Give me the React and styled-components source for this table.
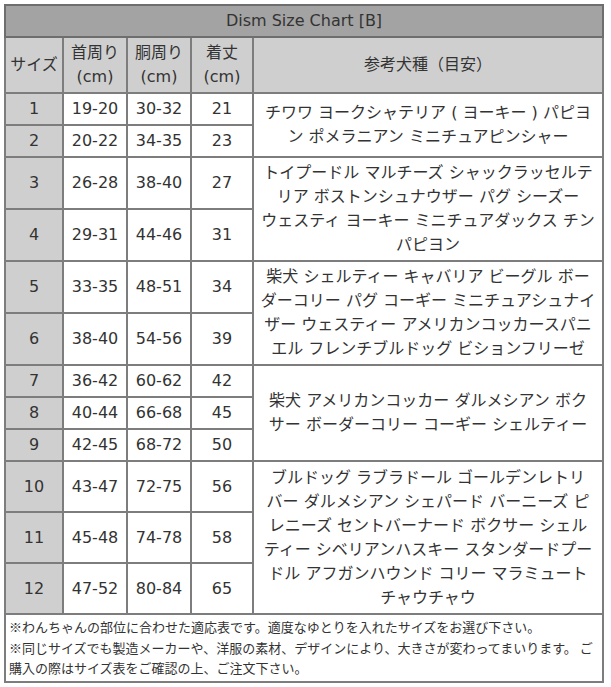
import React from "react";
import styled, { createGlobalStyle } from "styled-components";

const GlobalStyle = createGlobalStyle`
  body {
    margin: 0;
    background: #ffffff;
    font-family: "DejaVu Sans", "Noto Sans CJK JP", sans-serif;
    color: #333333;
  }
`;

const groups = [
  {
    height: 32,
    rows: [
      ["1", "19-20", "30-32", "21"],
      ["2", "20-22", "34-35", "23"],
    ],
    breeds: [
      "チワワ ヨークシャテリア ( ヨーキー ) パピヨ",
      "ン ポメラニアン ミニチュアピンシャー",
    ],
  },
  {
    height: 52,
    rows: [
      ["3", "26-28", "38-40", "27"],
      ["4", "29-31", "44-46", "31"],
    ],
    breeds: [
      "トイプードル マルチーズ シャックラッセルテ",
      "リア ボストンシュナウザー パグ シーズー",
      "ウェスティ ヨーキー ミニチュアダックス チン",
      "パピヨン",
    ],
  },
  {
    height: 52,
    rows: [
      ["5", "33-35", "48-51", "34"],
      ["6", "38-40", "54-56", "39"],
    ],
    breeds: [
      "柴犬 シェルティー キャバリア ビーグル ボー",
      "ダーコリー パグ コーギー ミニチュアシュナイ",
      "ザー ウェスティー アメリカンコッカースパニ",
      "エル フレンチブルドッグ ビションフリーゼ",
    ],
  },
  {
    height: 32,
    rows: [
      ["7", "36-42", "60-62", "42"],
      ["8", "40-44", "66-68", "45"],
      ["9", "42-45", "68-72", "50"],
    ],
    breeds: [
      "柴犬 アメリカンコッカー ダルメシアン ボク",
      "サー ボーダーコリー コーギー シェルティー",
    ],
  },
  {
    height: 51,
    rows: [
      ["10", "43-47", "72-75", "56"],
      ["11", "45-48", "74-78", "58"],
      ["12", "47-52", "80-84", "65"],
    ],
    breeds: [
      "ブルドッグ ラブラドール ゴールデンレトリ",
      "バー ダルメシアン シェパード バーニーズ ピ",
      "レニーズ セントバーナード ボクサー シェル",
      "ティー シベリアンハスキー スタンダードプー",
      "ドル アフガンハウンド コリー マラミュート",
      "チャウチャウ",
    ],
  },
];

const notes = [
  "※わんちゃんの部位に合わせた適応表です。適度なゆとりを入れたサイズをお選び下さい。",
  "※同じサイズでも製造メーカーや、洋服の素材、デザインにより、大きさが変わってまいります。 ご",
  "購入の際はサイズ表をご確認の上、ご注文下さい。",
];

const Lines = ({ lines }) =>
  lines.map((line, i) => (
    <React.Fragment key={i}>
      {line}
      {i < lines.length - 1 && <br />}
    </React.Fragment>
  ));

export default function App() {
  return (
    <Page>
      <GlobalStyle />
      <ChartTable>
        <colgroup>
          <col style={{ width: 58 }} />
          <col style={{ width: 64 }} />
          <col style={{ width: 64 }} />
          <col style={{ width: 62 }} />
          <col />
        </colgroup>
        <thead>
          <Row height={32}>
            <TitleCell colSpan={5}>Dism Size Chart [B]</TitleCell>
          </Row>
          <Row height={56}>
            <HeadCell>サイズ</HeadCell>
            <HeadCell>
              首周り
              <br />
              (cm)
            </HeadCell>
            <HeadCell>
              胴周り
              <br />
              (cm)
            </HeadCell>
            <HeadCell>
              着丈
              <br />
              (cm)
            </HeadCell>
            <HeadCell>参考犬種（目安）</HeadCell>
          </Row>
        </thead>
        <tbody>
          {groups.map((group) =>
            group.rows.map((row, i) => (
              <Row key={row[0]} height={group.height}>
                <SizeCell>{row[0]}</SizeCell>
                <Cell>{row[1]}</Cell>
                <Cell>{row[2]}</Cell>
                <Cell>{row[3]}</Cell>
                {i === 0 && (
                  <BreedCell rowSpan={group.rows.length}>
                    <Lines lines={group.breeds} />
                  </BreedCell>
                )}
              </Row>
            ))
          )}
          <Row height={67}>
            <NoteCell colSpan={5}>
              <Lines lines={notes} />
            </NoteCell>
          </Row>
        </tbody>
      </ChartTable>
    </Page>
  );
}

const Page = styled.div`
  padding: 4px 0 0 4px;
`;

const ChartTable = styled.table`
  width: 600px;
  table-layout: fixed;
  border-collapse: collapse;
  border: 2px solid #6e6e6e;
  font-size: 16px;
  line-height: 24px;
`;

const Row = styled.tr`
  height: ${(props) => props.height}px;
`;

const Cell = styled.td`
  border: 2px solid #7d7d7d;
  padding: 0;
  text-align: center;
  vertical-align: middle;
  background: #ffffff;
  white-space: nowrap;
`;

const TitleCell = styled.th`
  border: 2px solid #6e6e6e;
  background: #a3a3a3;
  font-weight: normal;
  padding: 0;
  text-align: center;
  vertical-align: middle;
`;

const HeadCell = styled(Cell).attrs({ as: "th" })`
  background: #cfcfcf;
  font-weight: normal;
`;

const SizeCell = styled(Cell)`
  background: #cfcfcf;
`;

const BreedCell = styled(Cell)`
  padding: 0 4px;
`;

const NoteCell = styled(Cell)`
  text-align: left;
  padding: 2px 3px;
  font-size: 13px;
  line-height: 20.5px;
  font-family: "Noto Sans CJK JP", sans-serif;
`;
